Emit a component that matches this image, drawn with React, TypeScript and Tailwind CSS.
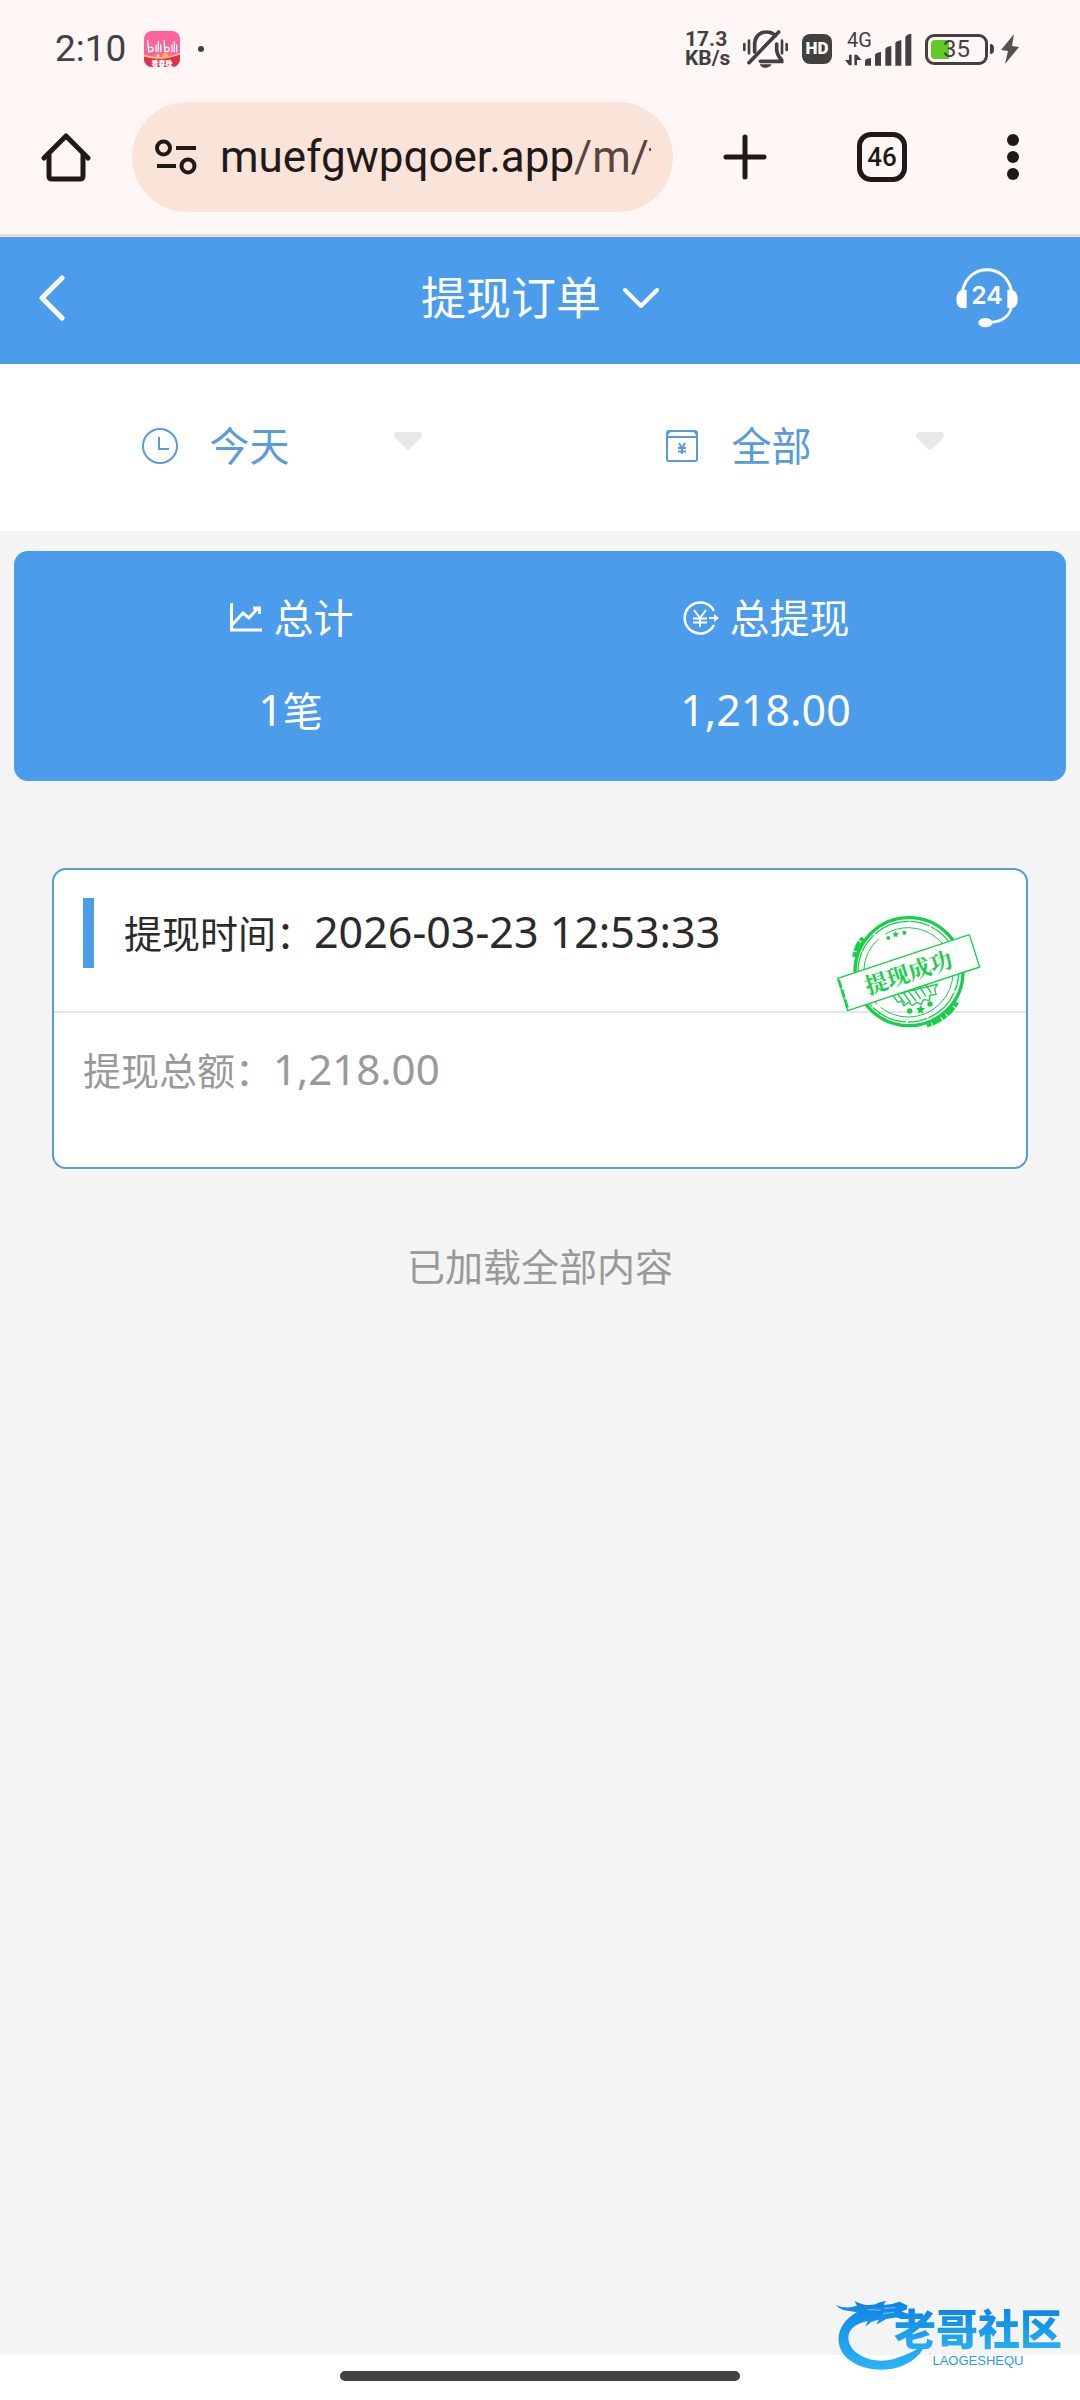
import type { ReactNode } from "react";

const BellOff = () => (
  <svg viewBox="0 0 135 114" className="h-[38px] w-[45px]" fill="none" stroke="#434040" strokeWidth="11" strokeLinecap="round" aria-label="静音">
    <path d="M4 42v18M18 32v38M131 42v18M117 32v38" strokeWidth="8" />
    <path d="M35 66V40C37 16 54 6 70 6c12 0 21 4 27 11" />
    <path d="M101 42v16c0 16 7 23 15 32v4H52" />
    <path d="M107 6L18 98" />
    <path d="M50 103h36c-6 14-30 14-36 0z" fill="#434040" stroke="none" />
  </svg>
);

const Signal = () => (
  <svg viewBox="0 0 198 102" className="h-[34px] w-[66px] overflow-visible" fill="#434040" aria-label="4G 信号">
    <text x="6" y="45" fontSize="60" fontFamily="Roboto, sans-serif">4G</text>
    <path d="M12 68h8v32h-8L0 84h12zM28 100h8V84h14L36 68h-8z" />
    <path d="M60 101V86q0-6 18-8v23zM90 101V69q0-6 18-9v41zM121 101V51q0-6 18-10v60zM151 101V34q0-6 18-10v77zM181 101V16q0-8 18-11v96z" />
  </svg>
);

const Home = () => (
  <svg viewBox="0 0 50 50" className="h-[50px] w-[50px]" fill="none" stroke="#1f1a17" strokeWidth="5" strokeLinejoin="round" strokeLinecap="round">
    <path d="M8 23v21q0 3 3 3h28q3 0 3-3V23" />
    <path d="M3 26L25 4l22 22" />
  </svg>
);

const Tune = () => (
  <svg viewBox="0 0 42 36" className="h-9 w-[42px] shrink-0" fill="none" stroke="#1f1a17" strokeWidth="4">
    <circle cx="8.500" cy="9" r="6.500" />
    <circle cx="33" cy="27" r="6.500" />
    <path d="M21 9h20M2 27h19" />
  </svg>
);

const Headset = () => (
  <svg viewBox="0 0 186 180" className="h-[60px] w-[62px]" fill="#fff">
    <path d="M20 66C30 26 60 5 93 5s63 21 73 61" fill="none" stroke="#fff" strokeWidth="9" />
    <path d="M166 118C160 148 134 162 104 163" fill="none" stroke="#fff" strokeWidth="8" />
    <path d="M32 66v54Q0 126 1 94 1 62 32 66zM154 66v54Q186 126 185 94 185 62 154 66z" />
    <ellipse cx="88" cy="164" rx="21" ry="14" />
    <text x="93" y="109" textAnchor="middle" fontSize="74" fontFamily="Inter, sans-serif" fontWeight="600">24</text>
  </svg>
);

const Clock = () => (
  <svg viewBox="0 0 38 38" className="h-[38px] w-[38px]" fill="none" stroke="#5a9bd8" strokeWidth="2">
    <circle cx="19" cy="19" r="17" />
    <path d="M18 10v12h10" />
  </svg>
);

const Wallet = () => (
  <svg viewBox="0 0 38 38" className="h-[38px] w-[38px]" fill="none" stroke="#5a9bd8" strokeWidth="2">
    <rect x="4" y="4" width="30" height="30" rx="2" />
    <path d="M4 9q1-5 5-5h20q4 0 5 5M4 10h30M16 16l3 5 3-5M19 21v6M15 21h8M15 24.500h8" />
  </svg>
);

const Chart = () => (
  <svg viewBox="0 0 36 36" className="h-9 w-9" fill="none" stroke="#fff" strokeWidth="3">
    <path d="M3.500 3v27H34" />
    <path d="M4 25l11-12 6 5 9-10M25 8h6.500v6" strokeWidth="3" />
  </svg>
);

const YenOut = () => (
  <svg viewBox="0 0 38 36" className="h-9 w-[38px]" fill="none" stroke="#fff" strokeWidth="2">
    <path d="M32 11A15.500 15.500 0 1 0 32 25" strokeWidth="2.500" />
    <path d="M12 10l6 8 6-8M18 18v9M11 18.500h14M11 22.500h14M27 18h7" />
    <path d="M32 14l5 4-5 4z" fill="#fff" stroke="none" />
  </svg>
);

const Stamp = () => (
  <svg viewBox="105 100 444 351" className="h-[117px] w-[148px]" fill="none" stroke="#18cf4c" aria-label="提现成功">
    <circle cx="327" cy="276" r="162" strokeWidth="10" />
    <circle cx="325" cy="276" r="151" strokeWidth="4" strokeDasharray="60 5 110 4" />
    <path d="M164 232q6-38 26-56M380 436q62-18 92-72" strokeWidth="15" strokeDasharray="14 3 30 4" />
    <circle cx="325" cy="278" r="134" strokeWidth="3" strokeDasharray="300 14 220 24" />
    <g fill="#18cf4c" stroke="none">
      <circle cx="265" cy="175" r="6" />
      <path d="M287 154l3 6 7 1-5 5 1 7-6-3-6 3 1-7-5-5 7-1z" />
      <circle cx="313" cy="159" r="6" />
      <circle cx="329" cy="394" r="8" />
      <path d="M362 376l4 8 9 2-7 7 2 9-8-4-8 4 1-9-6-7 9-2z" />
      <circle cx="390" cy="373" r="8" />
    </g>
    <path d="M278 346l16 22 10-4 8 14 14-10 12 10 12-10 14 6 6-14 18 2 2-16 18-2-4-16 8-14z" strokeWidth="4" />
    <path d="M290 340l24 30M306 334l26 34M322 330l26 34M340 326l22 32M358 320l20 30M376 314l18 26" strokeWidth="4" />
    <path d="M113 296L508 165 539 262 143 393z" fill="#fff" strokeWidth="4" strokeLinejoin="round" />
    <path d="M116 300l28 88" strokeWidth="8" strokeDasharray="26 5" />
    <text x="326" y="304" transform="rotate(-18.300 326 280)" textAnchor="middle" fontSize="68" fontWeight="700" fontFamily="'Noto Serif CJK SC', 'Noto Sans CJK SC', sans-serif" fill="#18cf4c" stroke="none">提现成功</text>
  </svg>
);

const Dragon = () => (
  <svg viewBox="50 45 275 235" className="h-[78px] w-[92px]">
    <defs>
      <linearGradient id="sea" x1="0" y1="0" x2="0" y2="1">
        <stop offset="0" stopColor="#0f84e4" />
        <stop offset="1" stopColor="#2bb4f5" />
      </linearGradient>
    </defs>
    <path
      fill="url(#sea)"
      d="M54 78q34 14 64 2l-8-14q34 18 64 10 12-8 34-10-10 6-8 12 26-2 46-10l24 12-2 12-16 6 18 6-6 16-28-4-30 4-30 18 8-16-24 8-16 14 6-18C100 136 84 164 96 196c18 42 84 62 142 42 42-14 66-28 84-44-6 34-46 66-98 76-70 12-140-14-158-66-12-40 8-80 52-104l-22-4q-24 0-42-18z"
    />
    <path d="M150 92l40 2M200 88l34-2M196 104l34-4" stroke="#79c4f8" strokeWidth="3" />
  </svg>
);

function Filter({ id, label, options, icon }: { id: string; label: string; options: string[]; icon: ReactNode }) {
  return (
    <div className="flex items-center justify-center gap-[31px]">
      <label htmlFor={id} aria-label={label}>{icon}</label>
      <div className="relative">
        <select id={id} className="h-16 w-[212px] appearance-none bg-transparent text-[40px] leading-[64px] text-[#5a9bd8] outline-none">
          {options.map((o) => <option key={o}>{o}</option>)}
        </select>
        <svg viewBox="0 0 28 18" className="pointer-events-none absolute top-[18px] right-0 h-[18px] w-7" fill="#e8e8e8">
          <path d="M4 0h20q4 0 4 3 0 2-2 4L16 17q-2 2-4 0L2 7Q0 5 0 3q0-3 4-3z" />
        </svg>
      </div>
    </div>
  );
}

function Total({ icon, label, children }: { icon: ReactNode; label: string; children: ReactNode }) {
  return (
    <div className="flex flex-col items-center gap-7">
      <dt className="flex items-center gap-[10px] text-[40px] leading-[64px]">{icon}{label}</dt>
      <dd className="text-[43px] leading-[64px]">{children}</dd>
    </div>
  );
}

export default function App() {
  return (
    <div className="relative flex min-h-screen flex-col bg-[#f4f4f4] font-['Noto_Sans','Noto_Sans_CJK_SC',sans-serif]">
      <div className="border-b-[3px] border-[#e8dcda] bg-[#fff7f5] font-['Roboto',sans-serif]">
        <div className="flex h-[98px] items-center pr-[61px] pl-[55px] text-[#434040]">
          <span className="text-[37px]">2:10</span>
          <svg viewBox="0 0 108 108" className="ml-[18px] h-9 w-9" aria-label="bilibili">
            <defs>
              <clipPath id="tile"><rect width="108" height="108" rx="24" /></clipPath>
            </defs>
            <g clipPath="url(#tile)">
              <path fill="#fb6496" d="M0 0h108v108H0z" />
              <path fill="#e3304a" d="M0 76q54 14 108-6v38H0z" />
              <path d="M0 74q54 16 108-6" stroke="#ffc98a" strokeWidth="5" fill="none" />
              <circle cx="64" cy="74" r="8" fill="#ffb34d" />
              <circle cx="42" cy="74" r="5" fill="#ffd9a0" />
              <g stroke="#fff" strokeWidth="4" fill="none" strokeLinecap="round">
                <path d="M11 28l3 34q16 0 14-9-3-7-12-3M36 42v20M43 32v30M50 42v20M60 28l3 34q15 0 13-9-3-7-11-3M84 42v20M91 32v30M98 42v20" />
              </g>
              <text x="54" y="104" textAnchor="middle" fontSize="21" fontWeight="900" fontFamily="'Noto Sans CJK SC', sans-serif" fill="#fff">看春晚</text>
            </g>
          </svg>
          <span className="ml-[18px] h-[6px] w-[6px] rounded-full bg-[#434040]" />
          <span className="ml-auto flex w-[48px] flex-col text-[21px] leading-[19px] font-bold"><span>17.3</span><span>KB/s</span></span>
          <span className="ml-[10px]"><BellOff /></span>
          <span className="ml-[14px] flex h-[30px] w-[30px] items-center justify-center rounded-lg bg-[#434040] text-[17px] font-black text-white">HD</span>
          <span className="ml-[13px]"><Signal /></span>
          <span className="relative ml-[14px] flex h-[31px] w-[63px] items-center justify-center rounded-[9px] border-[3px] border-[#434040] text-[24px]">
            <span className="absolute top-[3px] left-[3px] h-[19px] w-[18px] rounded-l-[4px] bg-[#62c928]" />
            <span className="relative">35</span>
          </span>
          <span className="ml-[2px] h-[10px] w-[4px] rounded-r-sm bg-[#434040]" />
          <svg viewBox="0 0 18 30" className="ml-[7px] h-[30px] w-[18px]" fill="#555152"><path d="M13 0L0 16l7 1-3 13 14-17-7-1z" /></svg>
        </div>
        <div className="flex h-[136px] items-center pt-[4px] pr-[61px] pb-[22px] pl-[41px] text-[#1f1a17]">
          <button aria-label="主页"><Home /></button>
          <button className="ml-[41px] flex h-[110px] min-w-0 flex-1 items-center gap-[23px] rounded-full bg-[#fae4d9] pr-[22px] pl-[23px]">
            <Tune />
            <span className="min-w-0 flex-1 overflow-hidden text-left text-[44px] whitespace-nowrap">muefgwpqoer.app<span className="text-[#59453d]">/m/t</span></span>
          </button>
          <button className="ml-[50px]" aria-label="新标签页">
            <svg viewBox="0 0 44 46" className="h-[46px] w-11" stroke="#1f1a17" strokeWidth="5" strokeLinecap="round"><path d="M22 3v40M3 23h38" /></svg>
          </button>
          <button className="ml-[90px] flex h-[50px] w-[50px] items-center justify-center rounded-[14px] border-[5px] border-[#1f1a17] text-[26px] font-medium">46</button>
          <button className="ml-[100px] flex w-3 flex-col items-center gap-[5px]" aria-label="菜单">
            <span className="h-3 w-3 rounded-full bg-[#1f1a17]" />
            <span className="h-3 w-3 rounded-full bg-[#1f1a17]" />
            <span className="h-3 w-3 rounded-full bg-[#1f1a17]" />
          </button>
        </div>
      </div>

      <header className="grid h-[127px] grid-cols-[1fr_auto_1fr] items-center bg-[#4b9ceb] px-[38px] pb-[6px] text-white">
        <button className="justify-self-start" aria-label="返回">
          <svg viewBox="0 0 28 46" className="h-[46px] w-7" fill="none" stroke="#fff" strokeWidth="5" strokeLinecap="round" strokeLinejoin="round"><path d="M24 3L4 23l20 20" /></svg>
        </button>
        <button className="flex items-center gap-[22px]">
          <h1 className="text-[45px]">提现订单</h1>
          <svg viewBox="0 0 36 22" className="h-[22px] w-9" fill="none" stroke="#fff" strokeWidth="4" strokeLinecap="round" strokeLinejoin="round"><path d="M2 3l16 16L34 3" /></svg>
        </button>
        <button className="mr-6 justify-self-end" aria-label="客服"><Headset /></button>
      </header>

      <div className="grid h-[167px] grid-cols-2 items-center bg-white pr-4 pb-1 pl-5">
        <Filter id="day" label="日期" options={["今天"]} icon={<Clock />} />
        <Filter id="kind" label="类型" options={["全部"]} icon={<Wallet />} />
      </div>

      <main className="flex flex-1 flex-col px-[14px] pt-5">
        <dl className="grid grid-cols-2 rounded-[14px] bg-[#4b9ceb] pt-[35px] pr-[63px] pb-[38px] pl-[39px] text-white">
          <Total icon={<Chart />} label="总计">1<span className="text-[40px]">笔</span></Total>
          <Total icon={<YenOut />} label="总提现">1,218.00</Total>
        </dl>

        <article className="relative mx-[38px] mt-[87px] rounded-[14px] border-2 border-[#5a9bd8] bg-white">
          <div className="flex items-center gap-[30px] border-b-2 border-[#e6e6e6] px-[29px] pt-[27px] pb-[43px]">
            <span className="h-[70px] w-[11px] bg-[#4b9ceb]" />
            <p className="text-[38px] leading-[70px] text-[#2a2a2a]">提现时间：<time className="text-[43px]">2026-03-23 12:53:33</time></p>
          </div>
          <p className="px-[29px] pt-[21px] pb-[62px] text-[38px] leading-[70px] text-[#999]">提现总额：<span className="text-[42px]">1,218.00</span></p>
          <div className="absolute top-[43px] right-[43px]"><Stamp /></div>
        </article>

        <p className="mt-[65px] text-center text-[38px] leading-[64px] text-[#999]">已加载全部内容</p>
      </main>

      <footer className="flex h-[45px] items-center justify-center bg-white pb-1">
        <span className="h-[10px] w-[400px] rounded-full bg-[#444]" />
      </footer>

      <div className="absolute right-[18px] bottom-[28px] flex">
        <Dragon />
        <div className="-ml-8 flex flex-col items-center pt-[14px] font-['Liberation_Sans','Noto_Sans_CJK_SC',sans-serif]">
          <span className="bg-linear-to-b from-[#0f84e4] to-[#2bb4f5] bg-clip-text text-[42px] leading-[46px] font-black text-transparent">老哥社区</span>
          <span className="text-[13px] leading-[14px] text-[#2a9be8]">LAOGESHEQU</span>
        </div>
      </div>
    </div>
  );
}
